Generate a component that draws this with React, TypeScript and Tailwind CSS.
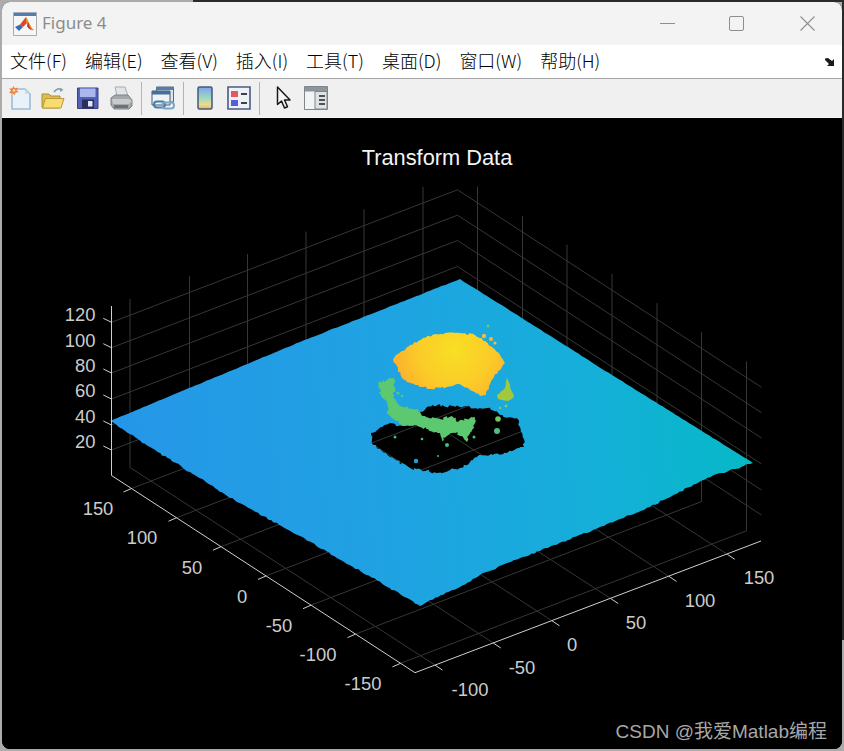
import { ReactNode } from 'react';

type Pt = [number, number];

// small seeded random so the noisy edges stay the same between renders
function makeRandom(seed: number) {
  let s = seed;
  return () => {
    s = (s * 16807) % 2147483647;
    return s / 2147483647;
  };
}

function rough(points: Pt[], amp: number, seed: number, step = 4): string {
  const rnd = makeRandom(seed);
  const out: string[] = [];
  for (let i = 0; i < points.length - 1; i++) {
    const [x1, y1] = points[i];
    const [x2, y2] = points[i + 1];
    const n = Math.max(1, Math.round(Math.hypot(x2 - x1, y2 - y1) / step));
    for (let k = 0; k < n; k++) {
      const t = k / n;
      const a = k === 0 ? 0 : amp;
      const x = x1 + (x2 - x1) * t + (rnd() - 0.5) * a;
      const y = y1 + (y2 - y1) * t + (rnd() - 0.5) * a;
      out.push(`${x.toFixed(1)} ${y.toFixed(1)}`);
    }
  }
  return out.join(' L');
}

function closed(points: Pt[], amp: number, seed: number, step = 4) {
  return `M${rough([...points, points[0]], amp, seed, step)} Z`;
}

const plateBack: Pt[] = [[110, 421], [300, 342], [460, 279], [612, 375], [753, 463]];
const plateFront: Pt[] = [
  [753, 463], [707, 478], [650, 507], [593, 530], [523, 557], [483, 573], [460, 587], [427, 602], [420, 606],
  [400, 594], [353, 567], [300, 536], [237, 502], [190, 472], [150, 447], [110, 421],
];

// hole and dome traced in page pixels
const holeEdge: Pt[] = [
  [371, 433], [390, 423], [403, 426], [420, 412], [433, 405], [460, 407], [487, 408], [500, 415],
  [517, 418], [522, 433], [524, 447], [507, 453], [493, 455], [480, 455], [460, 468], [437, 473],
  [410, 468], [390, 457], [373, 445],
];

const domeEdge: Pt[] = [
  [393, 359], [402, 351], [410, 345], [423, 338], [440, 334], [460, 333], [475, 335], [485, 341],
  [493, 348], [500, 355], [505, 363], [502, 367], [498, 371], [494, 377], [489, 386], [486, 395],
  [480, 396], [475, 392], [468, 388], [457, 384], [447, 387], [432, 389], [418, 385], [407, 382],
  [402, 378], [398, 368],
];

const ringEdge: Pt[] = [
  [378, 383], [393, 378], [395, 388], [393, 398], [400, 406], [418, 409], [423, 416], [440, 419],
  [452, 416], [457, 422], [475, 417], [474, 428], [467, 437], [467, 442], [462, 436], [455, 433],
  [447, 436], [442, 441], [440, 433], [428, 429], [413, 426], [405, 426], [393, 419], [387, 413],
  [387, 402], [381, 395],
];

const rightBlob: Pt[] = [[497, 395], [505, 388], [507, 378], [510, 385], [514, 397], [508, 401], [498, 399]];

const spots: { x: number; y: number; r: number; fill: string }[] = [
  { x: 488, y: 326, r: 1.4, fill: '#5fd07a' }, { x: 484, y: 336, r: 2.2, fill: '#f8b93a' },
  { x: 491, y: 339, r: 2, fill: '#f8b93a' }, { x: 495, y: 343, r: 1.6, fill: '#f8b93a' },
  { x: 395, y: 437, r: 1.5, fill: '#38b8a8' }, { x: 422, y: 439, r: 1.3, fill: '#4cc080' },
  { x: 447, y: 445, r: 2, fill: '#3fbf90' }, { x: 474, y: 437, r: 1.5, fill: '#4cc080' },
  { x: 497, y: 431, r: 3, fill: '#4cc080' }, { x: 498, y: 419, r: 2.8, fill: '#6cc868' },
  { x: 416, y: 461, r: 2.2, fill: '#1da0d8' }, { x: 438, y: 456, r: 1, fill: '#3fbf90' },
  { x: 506, y: 406, r: 1.4, fill: '#8cc85a' }, { x: 500, y: 408, r: 1.2, fill: '#8cc85a' },
  { x: 398, y: 393, r: 1.6, fill: '#5cc870' }, { x: 402, y: 396, r: 1.3, fill: '#5cc870' },
];

const origin: Pt = [111.5, 475.5];
const front: Pt = [415, 672.7];
const zLevels = [322.3, 347.7, 373, 399, 425, 450];
const yTicks = [131.5, 176.5, 221, 266, 311, 355.5, 400.5];
const xTicks = [435, 493.3, 552, 610.7, 669, 727.3];
const leftWall = [130, 189.5, 247.5, 306, 364, 423];

const axisY = (x: number) => origin[1] + (x - origin[0]) * 0.65;
const axisX = (x: number) => front[1] - (x - front[0]) * 0.379;

const zLabels: [string, number][] = [['120', 314], ['100', 340], ['80', 365], ['60', 390], ['40', 416], ['20', 441]];
const yLabels: [string, number, number][] = [
  ['150', 98, 508], ['100', 142, 537], ['50', 192, 567], ['0', 242, 596],
  ['-50', 279, 625], ['-100', 318, 654], ['-150', 363, 683],
];
const xLabels: [string, number, number][] = [
  ['-100', 470, 689], ['-50', 522, 667], ['0', 572, 644],
  ['50', 636, 622], ['100', 700, 600], ['150', 759, 577],
];

function Plot() {
  const plate = `M${rough(plateBack, 0.5, 77, 4)} L${rough(plateFront, 1.7, 23, 3)} Z`;
  return (
    <svg className="block h-full w-full" viewBox="2 118 840 631">
      <defs>
        <linearGradient id="plate" gradientUnits="userSpaceOnUse" x1="110" y1="470" x2="753" y2="420">
          <stop offset="0" stopColor="#2696e8" />
          <stop offset="0.45" stopColor="#1fa3e2" />
          <stop offset="0.75" stopColor="#15afd9" />
          <stop offset="1" stopColor="#06b9c6" />
        </linearGradient>
        <radialGradient id="dome" gradientUnits="userSpaceOnUse" cx="455" cy="350" r="62">
          <stop offset="0" stopColor="#f8df24" />
          <stop offset="0.6" stopColor="#fbcb28" />
          <stop offset="1" stopColor="#fcb02f" />
        </radialGradient>
      </defs>

      {/* grille des parois et du sol */}
      <g stroke="#363636" strokeWidth="1" fill="none">
        {zLevels.map((z) => (
          <polyline key={z} points={`111.5,${z} 457.5,${z - 132.5} 761.5,${z + 65}`} />
        ))}
        {leftWall.map((x) => (
          <line key={x} x1={x} x2={x} y1={306 - (x - 111.5) * 0.383} y2={475.5 - (x - 111.5) * 0.383} />
        ))}
        {yTicks.map((x) => {
          const wall = x + 346;
          return <line key={x} x1={wall} x2={wall} y1={173.5 + (wall - 457.5) * 0.65} y2={343 + (wall - 457.5) * 0.65} />;
        })}
        {yTicks.map((x) => (
          <line key={x} x1={x} y1={axisY(x)} x2={x + 346} y2={axisY(x) - 132.5} />
        ))}
        {xTicks.map((x) => (
          <line key={x} x1={x} y1={axisX(x)} x2={x - 304} y2={axisX(x) - 197} />
        ))}
      </g>

      <path d={`${plate} ${closed(holeEdge, 3, 91, 2.5)}`} fill="url(#plate)" fillRule="evenodd" />
      <path d={closed(ringEdge, 3, 31, 2)} fill="#5cc870" />
      <path d={closed(rightBlob, 1.2, 17, 3)} fill="#a2c83e" />
      <path d={closed(domeEdge, 2.4, 55, 2.5)} fill="url(#dome)" />
      {spots.map((s) => (
        <circle key={`${s.x}-${s.y}`} cx={s.x} cy={s.y} r={s.r} fill={s.fill} />
      ))}

      {/* axes */}
      <g stroke="#cfcfcf" strokeWidth="1" fill="none">
        <polyline points="111.5,306 111.5,475.5 415,672.7 761,541" />
        {zLevels.map((z) => (
          <line key={z} x1="111.5" y1={z} x2="103.3" y2={z - 4} />
        ))}
        {yTicks.map((x) => (
          <line key={x} x1={x} y1={axisY(x)} x2={x - 8} y2={axisY(x) + 3.5} />
        ))}
        {xTicks.map((x) => (
          <line key={x} x1={x} y1={axisX(x)} x2={x + 7.5} y2={axisX(x) + 5} />
        ))}
      </g>

      <g fill="#cccccc" fontFamily='"Liberation Sans", Arial, sans-serif' fontSize="18.4">
        {zLabels.map(([t, y]) => (
          <text key={t} x="95.5" y={y + 6.5} textAnchor="end">{t}</text>
        ))}
        {yLabels.map(([t, x, y]) => (
          <text key={t} x={x} y={y + 6.5} textAnchor="middle">{t}</text>
        ))}
        {xLabels.map(([t, x, y]) => (
          <text key={t} x={x} y={y + 6.5} textAnchor="middle">{t}</text>
        ))}
      </g>
      <text x="437" y="165" textAnchor="middle" fill="#f4f4f4" fontFamily='"Liberation Sans", Arial, sans-serif' fontSize="21.8">
        Transform Data
      </text>
    </svg>
  );
}

function Icon({ children, className }: { children: ReactNode; className?: string }) {
  return (
    <svg viewBox="0 0 24 24" className={`h-6 w-6 shrink-0 ${className ?? ''}`}>
      {children}
    </svg>
  );
}

const NewIcon = ({ className }: { className?: string }) => (
  <Icon className={className}>
    <path d="M4 3h13l5 5v15H4z" fill="#e8f2fb" stroke="#9dbcd6" strokeWidth="1.600" strokeLinejoin="round" />
    <path d="M17 3v5h5z" fill="#c6dbec" />
    <path d="M5.500 0l1.300 2.600L10 1.600 8.400 4.400 11 6.200 7.600 6.600 6.500 9.500 4.800 6.800 1 7.200l2-2.600L1 2.200l3 .6z" fill="#ee7c34" />
    <circle cx="6" cy="4.500" r="1.400" fill="#fbd9a0" />
  </Icon>
);

const OpenIcon = ({ className }: { className?: string }) => (
  <Icon className={className}>
    <path d="M13 6c2-3 5-4 8-2" fill="none" stroke="#8aa0ad" strokeWidth="1.800" />
    <path d="M19 1.500l3.500 2.500-3.500 2z" fill="#8aa0ad" />
    <path d="M1 8h7l2 2h9v11a1 1 0 0 1-1 1H2a1 1 0 0 1-1-1z" fill="#e3bb48" stroke="#a98f3c" />
    <path d="M1.500 22l3-9.500H23l-3 9.500z" fill="#f7dc70" stroke="#b89a40" strokeLinejoin="round" />
  </Icon>
);

const SaveIcon = ({ className }: { className?: string }) => (
  <Icon className={className}>
    <path d="M1.500 2h20.500v20.500H1.500z" fill="#5260b8" stroke="#39427e" />
    <path d="M4 2.500h15.500v8.500H4z" fill="#aab6ee" />
    <path d="M6 13.500h12v9H6z" fill="#2b2f5c" />
    <path d="M12 15h4.500v5.500H12z" fill="#e4e6f4" />
  </Icon>
);

const PrintIcon = ({ className }: { className?: string }) => (
  <Icon className={className}>
    <path d="M6 1h10l3 9H8z" fill="#dfe5ea" stroke="#a7adb2" />
    <path d="M2 12l4-3h13l4 5v6l-3 3H5l-3-4z" fill="#a4a8aa" stroke="#7d8184" />
    <path d="M3 13h17l3 2-3 3H4z" fill="#c8cbcd" />
    <path d="M5 19h14v3H5z" fill="#6e7274" />
  </Icon>
);

const LinkIcon = ({ className }: { className?: string }) => (
  <Icon className={className}>
    <path d="M5.500 1h17v15h-17z" fill="#dde6ee" stroke="#4f6b86" />
    <path d="M5.500 1h17v3h-17z" fill="#557fa8" />
    <path d="M1 5h18v14H1z" fill="#eef3f7" stroke="#415d79" />
    <path d="M1 5h18v3.500H1z" fill="#436f9c" />
    <rect x="3" y="15.500" width="11" height="6" rx="3" fill="none" stroke="#4d7ba8" strokeWidth="2" />
    <rect x="11" y="16.500" width="12" height="6" rx="3" fill="none" stroke="#7da6c8" strokeWidth="2" />
  </Icon>
);

const ColorbarIcon = ({ className }: { className?: string }) => (
  <svg viewBox="0 0 16 24" className={`h-6 w-4 shrink-0 ${className ?? ''}`}>
    <defs>
      <linearGradient id="cbar" x1="0" y1="0" x2="0" y2="1">
        <stop offset="0" stopColor="#7da4e8" />
        <stop offset="0.5" stopColor="#9fd8c0" />
        <stop offset="0.8" stopColor="#eadc8c" />
        <stop offset="1" stopColor="#f0b070" />
      </linearGradient>
    </defs>
    <rect x="1" y="1" width="14" height="22" rx="1.500" fill="url(#cbar)" stroke="#44587c" strokeWidth="1.500" />
  </svg>
);

const LegendIcon = ({ className }: { className?: string }) => (
  <Icon className={className}>
    <path d="M1 1h22v22H1z" fill="#eef1f6" stroke="#4c5b85" strokeWidth="1.600" />
    <path d="M4 5h7v6H4z" fill="#e8565a" />
    <path d="M4 14h7v6H4z" fill="#5a5ce0" />
    <path d="M14 8h6M14 17h6" stroke="#3a4050" strokeWidth="1.800" />
  </Icon>
);

const CursorIcon = ({ className }: { className?: string }) => (
  <svg viewBox="0 0 15 24" className={`h-6 w-[15px] shrink-0 ${className ?? ''}`}>
    <path d="M1.500 1v17.500l4-3.500 3 7 3-1.300-3-6.700H14z" fill="#f6f6f6" stroke="#1a1a1a" strokeWidth="1.500" strokeLinejoin="round" />
  </svg>
);

const PanelIcon = ({ className }: { className?: string }) => (
  <Icon className={className}>
    <path d="M.5.5h23v23H.5z" fill="#f2f4f5" stroke="#7d8688" />
    <path d="M1 1h22v4.500H1z" fill="#8d979b" />
    <path d="M11 5.500h12V23H11z" fill="#e0e3e4" stroke="#7d8688" />
    <path d="M15 9h6v2h-6zM15 13h6v2h-6zM15 17h6v2h-6z" fill="#4d5254" />
  </Icon>
);

const Separator = ({ className }: { className: string }) => (
  <div className={`h-[33px] w-px shrink-0 bg-[#b4b4b4] ${className}`} />
);

function MatlabLogo() {
  return (
    <svg viewBox="0 0 24 24" className="ml-[11px] h-6 w-6 shrink-0">
      <path d="M.5.500h23v23H.500z" fill="#f4f6f8" stroke="#a8acb0" />
      <path d="M1 1h22v3H1z" fill="#4a80b4" />
      <path d="M2 15l5-2.500L10 15l-4 4z" fill="#3a6cb4" />
      <path d="M7 12.500L13 5l2 5-5 5z" fill="#d8482a" />
      <path d="M13 5c2 2 4 10 8 13-3 1-5-2-6-4l-2-4z" fill="#f08a2c" />
      <path d="M15 10c1 3 2 6 3.500 8-2-.500-3.500-2-4.500-4z" fill="#b83a20" />
    </svg>
  );
}

const menus = ['文件(F)', '编辑(E)', '查看(V)', '插入(I)', '工具(T)', '桌面(D)', '窗口(W)', '帮助(H)'];

export default function App() {
  return (
    <div className="relative h-[751px] w-[844px] overflow-hidden bg-[#ababab] p-[2px] font-['Noto_Sans',sans-serif]">
      <div className="absolute left-[193px] top-0 h-[2px] w-[651px] bg-[#2a2a2a]" />
      <div className="absolute right-0 top-0 h-[640px] w-[2px] bg-[#2a2a2a]" />

      <div className="relative flex h-[747px] w-[840px] flex-col overflow-hidden rounded-[8px] bg-black">
        {/* barre de titre */}
        <div className="flex h-[43px] shrink-0 items-center bg-[#f3f3f3]">
          <MatlabLogo />
          <span className="ml-[5px] -translate-y-px text-[17px] leading-none text-[#8c8c8c]">Figure 4</span>
          <div className="ml-auto flex items-center">
            <div className="h-px w-[15px] bg-[#8e8e8e]" />
            <div className="ml-[54px] h-[15px] w-[15px] rounded-[2px] border border-[#8e8e8e]" />
            <svg viewBox="0 0 15 15" className="ml-[56px] mr-[27px] h-[15px] w-[15px]">
              <path d="M.5.500l14 14M14.500.500l-14 14" stroke="#8e8e8e" strokeWidth="1.100" />
            </svg>
          </div>
        </div>

        {/* menu */}
        <div className="flex h-[34px] shrink-0 items-center border-b border-[#a6a6a6] bg-white pb-[3px] pl-[8px] pr-[6px]">
          <div className="flex items-center gap-[18px] font-['Noto_Sans_CJK_SC',sans-serif] text-[18px] font-light leading-none text-black">
            {menus.map((m) => (
              <span key={m}>{m}</span>
            ))}
          </div>
          <svg viewBox="0 0 11 9" className="ml-auto h-[9px] w-[11px] translate-y-[2px]">
            <path d="M0 .5l3-.500 4 3L9 1v7H2l2-2-4-4z" fill="#1a1a1a" />
          </svg>
        </div>

        {/* barre d'outils */}
        <div className="flex h-[39px] shrink-0 items-center border-b border-[#f8f8f8] bg-[#f0f0f0]">
          <NewIcon className="ml-[6px]" />
          <OpenIcon className="ml-[9px]" />
          <SaveIcon className="ml-[11px]" />
          <PrintIcon className="ml-[9px]" />
          <Separator className="ml-[8px]" />
          <LinkIcon className="ml-[9px]" />
          <Separator className="ml-[8px]" />
          <ColorbarIcon className="ml-[13px]" />
          <LegendIcon className="ml-[14px]" />
          <Separator className="ml-[8px]" />
          <CursorIcon className="ml-[16px]" />
          <PanelIcon className="ml-[13px]" />
        </div>

        {/* figure */}
        <div className="relative min-h-0 flex-1 bg-black">
          <Plot />
          <span className="absolute bottom-[8px] right-[15px] font-['Liberation_Sans','Noto_Sans_CJK_SC',sans-serif] text-[19px] leading-none text-[#a8a8a8]">
            CSDN @我爱Matlab编程
          </span>
        </div>
      </div>
    </div>
  );
}
